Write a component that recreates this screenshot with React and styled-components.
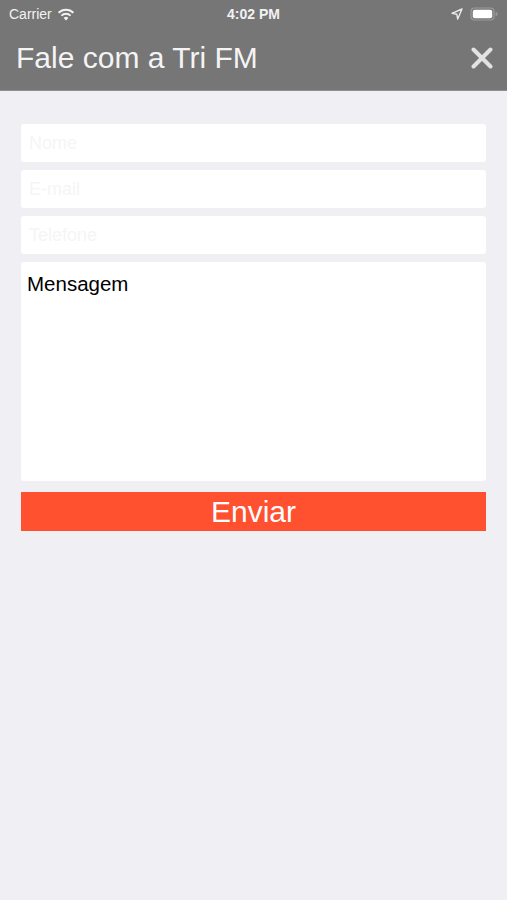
import React from 'react';
import styled, { createGlobalStyle } from 'styled-components';

const GlobalStyle = createGlobalStyle`
    body {
        margin: 0;
        background: #efeff4;
        font-family: 'Liberation Sans', Arial, sans-serif;
    }
`;

const Screen = styled.div`
    width: 507px;
    min-height: 900px;
    background: #efeff4;
`;

const Header = styled.div`
    background: #767676;
    height: 91px;
    border-bottom: 1px solid #8e8e8e;
    box-sizing: border-box;
    display: flex;
    flex-direction: column;
`;

const StatusBar = styled.div`
    height: 28px;
    display: flex;
    align-items: center;
    justify-content: space-between;
    padding: 0 9px;
    color: #f2f2f2;
    font-size: 14px;
    position: relative;
`;

const StatusLeft = styled.div`
    display: flex;
    align-items: center;
    gap: 5px;
`;

const StatusTime = styled.div`
    position: absolute;
    left: 0;
    right: 0;
    text-align: center;
    font-weight: bold;
    font-size: 14px;
    pointer-events: none;
`;

const StatusRight = styled.div`
    display: flex;
    align-items: center;
    gap: 7px;
`;

const TitleRow = styled.div`
    flex: 1;
    display: flex;
    align-items: center;
    justify-content: space-between;
    padding: 0 14px 2px 16px;
`;

const Title = styled.h1`
    margin: 0;
    font-weight: normal;
    font-size: 30px;
    color: #f4f4f4;
`;

const CloseButton = styled.button`
    background: none;
    border: 0;
    padding: 0;
    display: flex;
    cursor: pointer;
`;

const Form = styled.form`
    display: flex;
    flex-direction: column;
    gap: 8px;
    padding: 33px 21px 0 21px;
`;

const Field = styled.input`
    height: 38px;
    border: 0;
    border-radius: 3px;
    background: #fff;
    padding: 0 8px;
    font-family: inherit;
    font-size: 18px;
    outline: none;
    &::placeholder {
        color: #f5f5f7;
    }
`;

const Message = styled.textarea`
    height: 219px;
    border: 0;
    border-radius: 3px;
    background: #fff;
    padding: 10px 6px;
    font-family: inherit;
    font-size: 20.5px;
    resize: none;
    outline: none;
    box-sizing: border-box;
    &::placeholder {
        color: #000;
    }
`;

const SendButton = styled.button`
    margin-top: 3px;
    height: 39px;
    border: 0;
    background: #ff5030;
    color: #fff;
    font-family: inherit;
    font-size: 30px;
    padding: 0;
    cursor: pointer;
`;

const Wifi = () => (
    <svg width="18" height="13" viewBox="0 0 18 13">
        <path d="M9 12.5 L6.6 9.9 A3.4 3.4 0 0 1 11.4 9.9 Z" fill="#f2f2f2" />
        <path d="M4.4 7.6 A6.6 6.6 0 0 1 13.6 7.6" stroke="#f2f2f2" strokeWidth="2" fill="none" />
        <path d="M1.6 4.8 A10.4 10.4 0 0 1 16.4 4.8" stroke="#f2f2f2" strokeWidth="2" fill="none" />
    </svg>
);

const LocationArrow = () => (
    <svg width="12" height="12" viewBox="0 0 12 12">
        <path d="M11 1 L1 5.3 L5.8 6.2 L6.7 11 Z" fill="none" stroke="#eaeaea" strokeWidth="1.4" strokeLinejoin="round" />
    </svg>
);

const Battery = () => (
    <svg width="28" height="14" viewBox="0 0 28 14">
        <rect x="1" y="1" width="23" height="12" rx="3.5" fill="none" stroke="#9a9a9a" strokeWidth="1.2" />
        <rect x="2.8" y="2.8" width="19.4" height="8.4" rx="2" fill="#fff" />
        <path d="M25.6 5 a1.6 1.6 0 0 1 0 4 Z" fill="#9a9a9a" />
    </svg>
);

const CloseIcon = () => (
    <svg width="22" height="22" viewBox="0 0 22 22">
        <path d="M2.5 2.5 L19.5 19.5 M19.5 2.5 L2.5 19.5" stroke="#e2e2e2" strokeWidth="4" strokeLinecap="round" />
    </svg>
);

const App = () => {
    return (
        <Screen>
            <GlobalStyle />
            <Header>
                <StatusBar>
                    <StatusLeft>
                        <span>Carrier</span>
                        <Wifi />
                    </StatusLeft>
                    <StatusTime>4:02 PM</StatusTime>
                    <StatusRight>
                        <LocationArrow />
                        <Battery />
                    </StatusRight>
                </StatusBar>
                <TitleRow>
                    <Title>Fale com a Tri FM</Title>
                    <CloseButton type="button" aria-label="Fechar">
                        <CloseIcon />
                    </CloseButton>
                </TitleRow>
            </Header>
            <Form onSubmit={(e) => e.preventDefault()}>
                <Field placeholder="Nome" />
                <Field placeholder="E-mail" />
                <Field placeholder="Telefone" />
                <Message placeholder="Mensagem" />
                <SendButton type="submit">Enviar</SendButton>
            </Form>
        </Screen>
    );
};

export default App;
